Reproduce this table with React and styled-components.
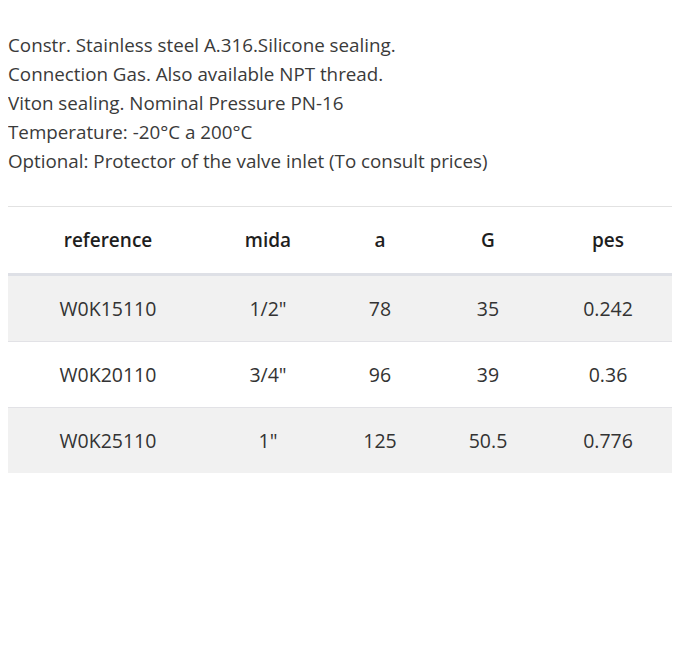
import React from 'react';
import styled, { createGlobalStyle } from 'styled-components';

const GlobalStyle = createGlobalStyle`
  body {
    margin: 8px;
    background: #ffffff;
    font-family: "Open Sans", Lato, sans-serif;
    color: #333333;
  }
`;

const rows = [
  { ref: 'W0K15110', mida: '1/2"', a: '78', g: '35', pes: '0.242' },
  { ref: 'W0K20110', mida: '3/4"', a: '96', g: '39', pes: '0.36' },
  { ref: 'W0K25110', mida: '1"', a: '125', g: '50.5', pes: '0.776' },
];

const lines = [
  'Constr. Stainless steel A.316.Silicone sealing.',
  'Connection Gas. Also available NPT thread.',
  'Viton sealing. Nominal Pressure PN-16',
  'Temperature: -20°C a 200°C',
  'Optional: Protector of the valve inlet (To consult prices)',
];

function App() {
  return (
    <>
      <GlobalStyle />
      <Wrapper>
        <Description>
          {lines.map((l) => (
            <p key={l}>{l}</p>
          ))}
        </Description>
        <Table>
          <thead>
            <tr>
              <th>reference</th>
              <th>mida</th>
              <th>a</th>
              <th>G</th>
              <th>pes</th>
            </tr>
          </thead>
          <tbody>
            {rows.map((r, i) => (
              <Row key={r.ref} $striped={i % 2 === 0}>
                <td>{r.ref}</td>
                <td>{r.mida}</td>
                <td>{r.a}</td>
                <td>{r.g}</td>
                <td>{r.pes}</td>
              </Row>
            ))}
          </tbody>
        </Table>
      </Wrapper>
    </>
  );
}

const Wrapper = styled.div`
  width: 664px;
  padding-top: 23px;
`;

const Description = styled.div`
  font-size: 18.8px;
  line-height: 29px;
  color: #3a3a3a;
  margin-bottom: 30px;
  p {
    margin: 0;
    white-space: nowrap;
  }
`;

const Table = styled.table`
  width: 100%;
  border-collapse: collapse;
  table-layout: fixed;
  font-size: 19.5px;
  th, td {
    text-align: center;
    vertical-align: middle;
    padding: 0;
  }
  th:nth-child(1) { width: 200px; }
  th:nth-child(2) { width: 120px; }
  th:nth-child(3) { width: 104px; }
  th:nth-child(4) { width: 112px; }
  th:nth-child(5) { width: 128px; }
  thead tr {
    border-top: 1px solid #e2e2e2;
    border-bottom: 3px solid #dee0e6;
  }
  th {
    height: 66px;
    font-size: 19px;
    font-weight: 600;
    color: #1e1e1e;
  }
`;

const Row = styled.tr`
  background: ${(p) => (p.$striped ? '#f1f1f1' : '#ffffff')};
  border-bottom: 1px solid #e2e2e6;
  &:last-child {
    border-bottom: none;
  }
  td {
    height: 65px;
    color: #333333;
  }
`;

export default App;
